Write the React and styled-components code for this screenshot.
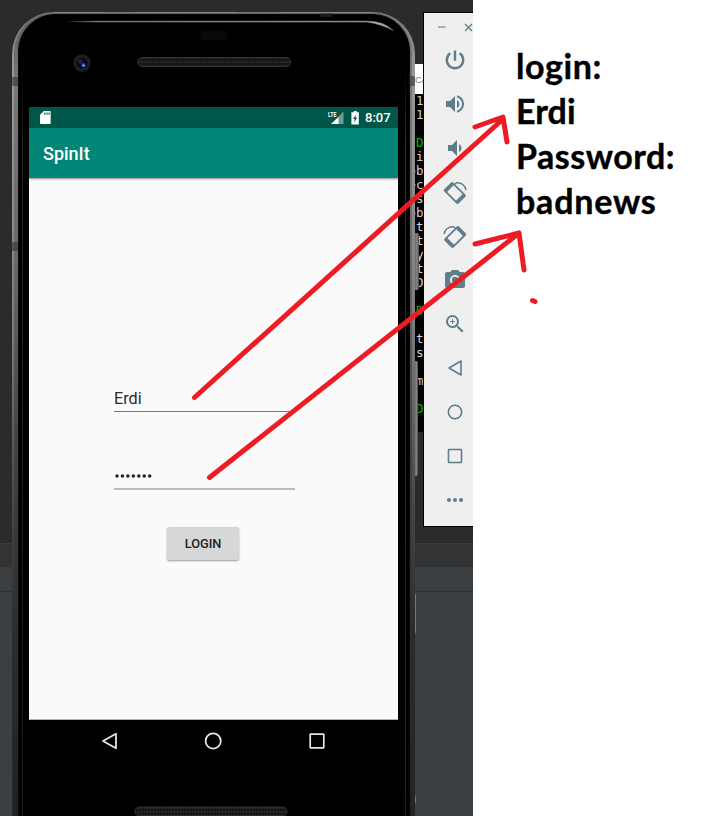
import React from "react";
import styled, { createGlobalStyle, css } from "styled-components";
import { MdVolumeUp, MdVolumeDown, MdPhotoCamera, MdZoomIn } from "react-icons/md";

const GlobalStyle = createGlobalStyle`
  * { box-sizing: border-box; }
  body { margin: 0; background: #fff; overflow: hidden; }
  svg { display: block; flex: none; }
`;

const Page = styled.main`
  position: relative;
  display: grid;
  grid-template-columns: 473px 1fr;
  width: 713px;
  height: 816px;
  overflow: hidden;
  background: #fff;
`;

const Desktop = styled.section`
  position: relative;
  display: flex;
  flex-direction: column;
  overflow: hidden;
`;

const Strip = styled.div`
  flex: ${(p) => (p.$h ? `0 0 ${p.$h}px` : "1")};
  background: ${(p) => p.$color};
  border-bottom: ${(p) => (p.$line ? `1px solid ${p.$line}` : "0")};
`;

/* Console window, mostly hidden by the emulator */
const Console = styled.div`
  position: absolute;
  left: 400px;
  top: 64px;
  width: 73px;
  height: 368px;
  background: #000;
  font-family: "DejaVu Sans Mono", monospace;
`;

const ConsoleTitle = styled.div`
  height: 30px;
  padding-left: 15px;
  background: #fff;
  color: #7e7e8c;
  font: 9.5px/31px "Liberation Sans", sans-serif;
`;

const ConsoleLine = styled.div`
  width: 23.5px;
  height: 14px;
  line-height: 14px;
  font-size: 12.5px;
  text-align: right;
  white-space: pre;
  color: ${(p) => (p.$green ? "#00b800" : "#cfcfd4")};
`;

const Phone = styled.div`
  position: absolute;
  left: 12px;
  top: 12px;
  width: 403px;
  height: 860px;
  padding: 1px 3px 0 2px;
  border-radius: 42px 42px 0 0;
  background: linear-gradient(#77797a 0, #999 60px, #8b8b8b 200px, #77797a 330px, #454545 500px, #2c2b2a 620px, #252423 100%);
`;

const Rim = styled.div`
  height: 100%;
  padding: 1px 2px 0 4px;
  border-radius: 40px 40px 0 0;
  background: linear-gradient(#5e5e5e 0, #777 70px, #686868 250px, #454545 420px, #302f2e 600px, #1d1c1b 100%);
`;

const Glass = styled.div`
  display: flex;
  flex-direction: column;
  height: 100%;
  padding: 0 9px 0 10px;
  border: 1px solid #090909;
  border-radius: 37px 37px 0 0;
  background:
    linear-gradient(#000, #252525 80px, #1b1b1b) 3px 50px / 1px 100% no-repeat,
    linear-gradient(#000, #303030 80px, #1b1b1b) calc(100% - 3px) 50px / 1px 100% no-repeat,
    #000;
`;

const Bezel = styled.svg`
  width: 371px;
  height: 92px;
  margin-left: -1px;
  overflow: visible;
`;

const SideKey = styled.div`
  position: absolute;
  left: 414px;
  top: ${(p) => p.$top}px;
  width: ${(p) => p.$w || 4}px;
  height: ${(p) => p.$h}px;
  border-radius: 0 2px 2px 0;
  background: ${(p) => p.$color || "linear-gradient(90deg, #555, #888 60%, #444)"};
`;

const TopRidge = styled.div`
  position: absolute;
  top: 12px;
  left: ${(p) => p.$left}px;
  width: ${(p) => p.$w}px;
  height: 1px;
  background: #888;
`;

const AntennaBand = styled.div`
  position: absolute;
  left: ${(p) => p.$left}px;
  top: ${(p) => p.$top}px;
  width: ${(p) => p.$w}px;
  height: ${(p) => p.$h}px;
  background: rgba(45, 45, 45, 0.55);
`;

const Screen = styled.div`
  display: flex;
  flex-direction: column;
  width: 369px;
  height: 613px;
  background: #fafafa;
  border-bottom: 1px solid #b0b5b4;
  font-family: Roboto, sans-serif;
`;

const StatusBar = styled.div`
  display: flex;
  align-items: center;
  height: 21px;
  padding: 0 7px 0 11px;
  background: #005749;
  color: #fff;
`;

const StatusRight = styled.div`
  display: flex;
  align-items: center;
  margin-left: auto;
`;

const Clock = styled.span`
  width: 26px;
  font-size: 13px;
  font-weight: 500;
  line-height: 21px;
  white-space: nowrap;
`;

const AppBar = styled.header`
  height: 50px;
  padding-left: 14px;
  background: #008577;
  box-shadow: 0 1px 2px rgba(0, 0, 0, 0.45);
  color: #fff;
  font-size: 18px;
  font-weight: 500;
  line-height: 52px;
`;

const Form = styled.div`
  display: flex;
  flex-direction: column;
  align-items: flex-start;
  padding: 207px 0 0 85px;
`;

const Field = styled.div`
  display: flex;
  align-items: center;
  width: 181px;
  height: ${(p) => p.$h}px;
  border-bottom: ${(p) => p.$line};
  color: #2a2a2a;
  font-size: 16.2px;
  line-height: 30px;
`;

const UserName = styled(Field)`
  padding-top: 2px;
`;

const Password = styled(Field)`
  margin-top: 50px;
  padding-top: 2px;
`;

const LoginButton = styled.button`
  width: 72px;
  height: 33px;
  margin: 36.5px 0 0 53px;
  padding: 0;
  border: 0;
  border-radius: 2px;
  background: #d6d7d7;
  box-shadow: 0 1px 2px rgba(0, 0, 0, 0.38);
  color: #212121;
  font: 500 12.8px/33px Roboto, sans-serif;
`;

const NavBar = styled.div`
  display: flex;
  align-items: center;
  justify-content: space-between;
  height: 42px;
  padding: 0 72px 0 71px;
`;

const BottomSpeaker = styled.svg`
  width: 154px;
  height: 12px;
  margin: 44px 0 0 105px;
`;

/* Emulator control strip */
const Controls = styled.aside`
  position: absolute;
  left: 423px;
  top: 12px;
  width: 64px;
  height: 515px;
  border: 1px solid #000;
  background: #efefef;
  color: #607d8b;
`;

const WindowButtons = styled.div`
  display: flex;
  align-items: center;
  gap: 18px;
  height: 25px;
  padding: 3px 0 0 14px;
`;

const ControlItem = styled.div`
  display: flex;
  align-items: center;
  justify-content: center;
  height: 44px;
  svg { ${(p) => p.$flip && css`transform: scaleX(-1);`} }
`;

const ControlList = styled.div`
  display: grid;
  grid-auto-rows: 44px;
`;

const Notes = styled.section`
  padding: 43px 0 0 43px;
  color: #000;
  font-family: Lato, sans-serif;
  font-size: 34px;
  font-weight: 700;
  -webkit-text-stroke: 0.4px #000;
`;

const NoteLine = styled.div`
  height: 45px;
  line-height: 46px;
  white-space: nowrap;
  letter-spacing: ${(p) => p.$track}px;
`;

const Ink = styled.svg`
  position: absolute;
  left: 0;
  top: 0;
  pointer-events: none;
`;

const RotateIcon = () => (
  <svg width="24" height="24" viewBox="0 0 24 24" fill="none" stroke="currentColor">
    <g transform="rotate(45 11.7 13)">
      <rect x="2.6" y="7.4" width="18.4" height="11" rx="1" strokeWidth="1.8" />
      <path d="M4 8v10M19.6 8v10" strokeWidth="3" />
    </g>
    <path d="M13.5 2.8c4.8-.4 8.7 2.6 9.4 7.2M11.5 4.5l3-2.5" strokeWidth="1.5" />
  </svg>
);

const LineIcon = ({ children, width = 1.6 }) => (
  <svg width="24" height="24" viewBox="0 0 24 24" fill="none" stroke="currentColor" strokeWidth={width} strokeLinejoin="round">
    {children}
  </svg>
);

const controls = [
  { icon: <LineIcon width={2.4}><path d="M12 2.6v10.2M7.3 5.3a8.2 8.2 0 1 0 9.4 0" /></LineIcon> },
  { icon: <MdVolumeUp size={24} /> },
  { icon: <MdVolumeDown size={24} /> },
  { icon: <RotateIcon /> },
  { icon: <RotateIcon />, flip: true },
  { icon: <MdPhotoCamera size={24} /> },
  { icon: <MdZoomIn size={24} /> },
  { icon: <LineIcon><path d="M18 5v14L6 12z" /></LineIcon> },
  { icon: <LineIcon><circle cx="12" cy="12" r="6.7" /></LineIcon> },
  { icon: <LineIcon><rect x="5.5" y="5.5" width="13" height="13" rx=".6" /></LineIcon> },
  {
    icon: (
      <svg width="24" height="24" viewBox="0 0 24 24" fill="currentColor">
        <circle cx="6" cy="12" r="2" /><circle cx="12" cy="12" r="2" /><circle cx="18" cy="12" r="2" />
      </svg>
    ),
  },
];

const consoleLines = [
  "1", "1", "", "*D", "i", "ob", "ec", "s", "ob", "ct", "t", "y", "t", "D",
  "", "*D", "", "t", "s", "", "m", "", "*D",
];

const Mesh = ({ id }) => (
  <pattern id={id} width="3" height="4" patternUnits="userSpaceOnUse">
    <rect width="3" height="4" fill="#171615" />
    <circle cx="1.5" cy="2" r="1" fill="#302e2a" />
  </pattern>
);

export default function App() {
  return (
    <Page>
      <GlobalStyle />
      <Desktop>
        <Strip $h={544} $color="#2b2b2b" $line="#3b3c3d" />
        <Strip $h={23} $color="#323335" />
        <Strip $h={25} $color="#3c3f41" $line="#2d2f30" />
        <Strip $color="#3c3f41" />

        <Console>
          <ConsoleTitle>C/</ConsoleTitle>
          {consoleLines.map((t, i) => (
            <ConsoleLine key={i} $green={t[0] === "*"}>{t.replace("*", "")}</ConsoleLine>
          ))}
        </Console>

        <SideKey $top={233} $h={57} $w={5} />
        <SideKey $top={361} $h={115} $w={4} />
        <SideKey $top={593} $h={41} $w={2} $color="#777" />
        <SideKey $top={795} $h={9} $w={2} $color="#777" />

        <Phone>
          <Rim>
            <Glass>
              <Bezel viewBox="28 15 371 92">
                <defs>
                  <Mesh id="meshTop" />
                  <linearGradient id="glint" x1="66" x2="394" y1="0" y2="0" gradientUnits="userSpaceOnUse">
                    <stop offset="0" stopColor="#888" stopOpacity="0" />
                    <stop offset=".1" stopColor="#888" />
                    <stop offset="1" stopColor="#aaa" />
                  </linearGradient>
                </defs>
                <path d="M66 21.2H367Q384 21.2 393 30.5Q382 24 367 22H66z" fill="url(#glint)" stroke="url(#glint)" strokeWidth=".5" />
                <rect x="200" y="31" width="27" height="9" rx="4.5" fill="#08090d" />
                <circle cx="82" cy="63" r="8.7" fill="#1d1d1e" />
                <circle cx="82" cy="63" r="5.3" fill="#07091a" />
                <circle cx="80.5" cy="61.5" r="2.2" fill="#17265e" />
                <circle cx="83.5" cy="65.3" r="2" fill="#3f55b8" />
                <circle cx="83.7" cy="65.5" r=".8" fill="#a9b8ff" />
                <rect x="137.7" y="57.5" width="153" height="9" rx="4.5" fill="url(#meshTop)" stroke="#34322f" />
              </Bezel>
              <Screen>
                <StatusBar>
                  <svg width="11" height="13" viewBox="0 0 11 13">
                    <path d="M3.8 0H9.7Q10.7 0 10.7 1V12Q10.7 13 9.7 13H1Q0 13 0 12V3.8z" fill="#fff" />
                    <path d="M4.8 1.5v2.3M7 1.5v2.3M9.1 1.5v2.3" stroke="#005749" strokeWidth="1.1" />
                  </svg>
                  <StatusRight>
                    <svg width="17" height="14" viewBox="0 0 17 14">
                      <path d="M15.5 .5v12.5H3.5z" fill="#6c9c94" />
                      <path d="M10.5 6v7H3z" fill="#fff" />
                      <rect width="9.2" height="7" fill="#005749" />
                      <text x="0" y="5.8" fill="#fff" fontSize="7.5" fontWeight="700" fontFamily="Roboto" textLength="8.4" lengthAdjust="spacingAndGlyphs">LTE</text>
                    </svg>
                    <svg width="20" height="14" viewBox="0 0 20 14">
                      <path d="M8.8 0h3v1.3h2V13.4H6.4V1.3h2.4z" fill="#fff" />
                      <path d="M11.2 3.5L8 8h1.8L9 11.5 12.3 6.8h-1.8z" fill="#005749" />
                    </svg>
                    <Clock>8:07</Clock>
                  </StatusRight>
                </StatusBar>
                <AppBar>SpinIt</AppBar>
                <Form>
                  <UserName $h={27} $line="1px solid #777">Erdi</UserName>
                  <Password $h={28} $line="2px solid #bcbcbc">
                    <svg width="40" height="6" viewBox="0 0 40 6" fill="#222">
                      {[0, 1, 2, 3, 4, 5, 6].map((i) => (
                        <circle key={i} cx={3 + i * 5.45} cy="3" r="1.75" />
                      ))}
                    </svg>
                  </Password>
                  <LoginButton>LOGIN</LoginButton>
                </Form>
              </Screen>
              <NavBar>
                <svg width="18" height="20" viewBox="0 0 18 20" fill="none" stroke="#e6e6e6" strokeWidth="1.8" strokeLinejoin="round">
                  <path d="M16 2.7v14.6L3 10z" />
                </svg>
                <svg width="20" height="20" viewBox="0 0 20 20" fill="none" stroke="#e6e6e6" strokeWidth="1.8">
                  <circle cx="10.2" cy="10" r="7.6" />
                </svg>
                <svg width="20" height="20" viewBox="0 0 20 20" fill="none" stroke="#e6e6e6" strokeWidth="1.7">
                  <rect x="2.2" y="3.2" width="13.6" height="13.6" rx=".5" />
                </svg>
              </NavBar>
              <BottomSpeaker viewBox="0 0 154 12">
                <defs><Mesh id="meshBottom" /></defs>
                <rect x="1" y="1" width="152" height="9" rx="4.5" fill="url(#meshBottom)" stroke="#34322f" />
              </BottomSpeaker>
            </Glass>
          </Rim>
        </Phone>
        <TopRidge $left={54} $w={51} />
        <TopRidge $left={134} $w={102} />
        <TopRidge $left={282} $w={89} />
        <AntennaBand $left={12} $top={77} $w={6} $h={9} />
        <AntennaBand $left={409} $top={76} $w={6} $h={10} />
        <AntennaBand $left={320} $top={13} $w={12} $h={4} />
        <AntennaBand $left={12} $top={242} $w={6} $h={9} />

        <Controls>
          <WindowButtons>
            <svg width="8" height="10" viewBox="0 0 8 10" stroke="#8198a3" strokeWidth="1.4"><path d="M0 5h7.5" /></svg>
            <svg width="9" height="9" viewBox="0 0 9 9" stroke="#607d8b" strokeWidth="1.3"><path d="M1 1l7 7M8 1L1 8" /></svg>
          </WindowButtons>
          <ControlList>
            {controls.map((c, i) => (
              <ControlItem key={i} $flip={c.flip}>{c.icon}</ControlItem>
            ))}
          </ControlList>
        </Controls>
      </Desktop>

      <Notes>
        <NoteLine $track={0.6}>login:</NoteLine>
        <NoteLine $track={0.1}>Erdi</NoteLine>
        <NoteLine $track={0.5}>Password:</NoteLine>
        <NoteLine $track={0.8}>badnews</NoteLine>
      </Notes>

      <Ink width="713" height="816" viewBox="0 0 713 816" fill="none" stroke="#ed1c24" strokeWidth="5" strokeLinecap="round" strokeLinejoin="round">
        <path d="M194.5 397.5L503 119M475 127L503 117L507 142" />
        <path d="M209.5 477.5L519 233M475 244L519 233L524 270M532.5 300.5L535 301.5" />
      </Ink>
    </Page>
  );
}
